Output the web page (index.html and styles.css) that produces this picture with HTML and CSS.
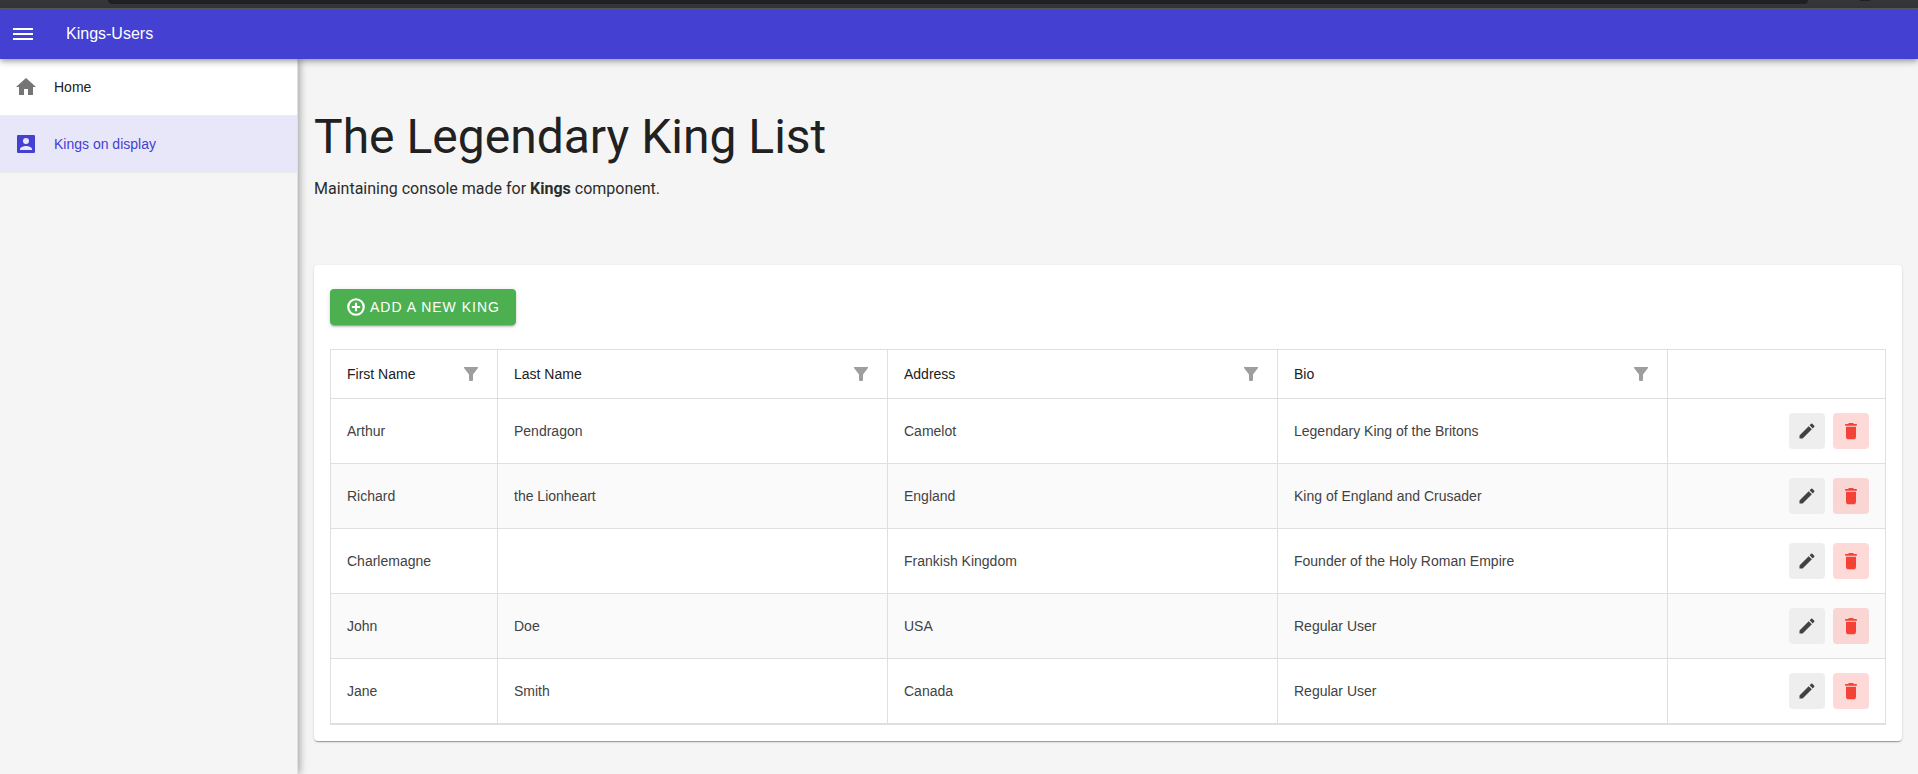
FILE: index.html
```html
<!DOCTYPE html>
<html lang="en">
<head>
<meta charset="utf-8">
<title>Kings-Users</title>
<link rel="stylesheet" href="styles.css">
</head>
<body>
<svg class="sprite" aria-hidden="true">
  <symbol id="filter" viewBox="0 0 14 14"><path d="M0 0h14v1L9 7.500V13q0 1-1 1H6q-1 0-1-1V7.500L0 1z"/></symbol>
  <symbol id="edit" viewBox="0 0 24 24"><path d="M3 17.250V21h3.750L17.810 9.940l-3.750-3.750L3 17.250zM20.710 7.040a1 1 0 0 0 0-1.410l-2.340-2.340a1 1 0 0 0-1.410 0l-1.830 1.830 3.750 3.750 1.830-1.830z"/></symbol>
  <symbol id="delete" viewBox="0 0 24 24"><path d="M6 7h12v11.500a3.500 3.500 0 0 1-3.500 3.500h-5A3.500 3.500 0 0 1 6 18.500zM19 3.500h-3.500l-1-1h-5l-1 1H5v2.300h14z"/></symbol>
</svg>
<div class="browser-strip"><span class="address-bar"></span><span class="browser-button"></span></div>
<header class="topbar">
  <button class="menu-button" type="button" aria-label="Toggle menu">
    <svg class="icon-24" viewBox="0 0 24 24"><path d="M2 6h20v2H2zM2 11h20v2H2zM2 16h20v2H2z"/></svg>
  </button>
  <span class="brand">Kings-Users</span>
</header>
<div class="layout">
  <nav class="sidebar" aria-label="Main">
    <a class="nav-link" href="#home"><svg class="icon-24" viewBox="0 0 24 24"><path d="M10 20v-6h4v6h5v-8h3L12 3 2 12h3v8z"/></svg>Home</a>
    <a class="nav-link active" href="#kings" aria-current="page"><svg class="icon-24" viewBox="0 0 24 24"><path d="M3 4v16a1 1 0 0 0 1 1h16a1 1 0 0 0 1-1V4a1 1 0 0 0-1-1H4a1 1 0 0 0-1 1zm12 5a3 3 0 1 1-6 0 3 3 0 0 1 6 0zm-9 8c0-2 4-3.100 6-3.100s6 1.100 6 3.100v1H6v-1z"/></svg>Kings on display</a>
  </nav>
  <main class="content">
    <h1 class="title">The Legendary King List</h1>
    <p class="subtitle">Maintaining console made for <strong>Kings</strong> component.</p>
    <section class="card">
      <button class="add-button" type="button"><svg class="icon-20" viewBox="0 0 24 24"><g fill="none" stroke="currentColor" stroke-width="2.600"><circle cx="12" cy="12" r="9.300"/><path d="M12 7v10M7 12h10"/></g></svg>Add a new king</button>
      <div class="grid">
        <table class="table">
          <colgroup><col class="col-first"><col><col><col><col class="col-actions"></colgroup>
          <thead>
            <tr>
              <th scope="col"><div class="head">First Name<button class="filter" type="button" aria-label="Filter first name"><svg class="icon-14"><use href="#filter"/></svg></button></div></th>
              <th scope="col"><div class="head">Last Name<button class="filter" type="button" aria-label="Filter last name"><svg class="icon-14"><use href="#filter"/></svg></button></div></th>
              <th scope="col"><div class="head">Address<button class="filter" type="button" aria-label="Filter address"><svg class="icon-14"><use href="#filter"/></svg></button></div></th>
              <th scope="col"><div class="head">Bio<button class="filter" type="button" aria-label="Filter bio"><svg class="icon-14"><use href="#filter"/></svg></button></div></th>
              <td></td>
            </tr>
          </thead>
          <tbody>
            <tr><td>Arthur</td><td>Pendragon</td><td>Camelot</td><td>Legendary King of the Britons</td><td><div class="actions"><button class="action" type="button" aria-label="Edit"><svg class="icon-20"><use href="#edit"/></svg></button><button class="action danger" type="button" aria-label="Delete"><svg class="icon-20"><use href="#delete"/></svg></button></div></td></tr>
            <tr><td>Richard</td><td>the Lionheart</td><td>England</td><td>King of England and Crusader</td><td><div class="actions"><button class="action" type="button" aria-label="Edit"><svg class="icon-20"><use href="#edit"/></svg></button><button class="action danger" type="button" aria-label="Delete"><svg class="icon-20"><use href="#delete"/></svg></button></div></td></tr>
            <tr><td>Charlemagne</td><td></td><td>Frankish Kingdom</td><td>Founder of the Holy Roman Empire</td><td><div class="actions"><button class="action" type="button" aria-label="Edit"><svg class="icon-20"><use href="#edit"/></svg></button><button class="action danger" type="button" aria-label="Delete"><svg class="icon-20"><use href="#delete"/></svg></button></div></td></tr>
            <tr><td>John</td><td>Doe</td><td>USA</td><td>Regular User</td><td><div class="actions"><button class="action" type="button" aria-label="Edit"><svg class="icon-20"><use href="#edit"/></svg></button><button class="action danger" type="button" aria-label="Delete"><svg class="icon-20"><use href="#delete"/></svg></button></div></td></tr>
            <tr><td>Jane</td><td>Smith</td><td>Canada</td><td>Regular User</td><td><div class="actions"><button class="action" type="button" aria-label="Edit"><svg class="icon-20"><use href="#edit"/></svg></button><button class="action danger" type="button" aria-label="Delete"><svg class="icon-20"><use href="#delete"/></svg></button></div></td></tr>
          </tbody>
        </table>
      </div>
    </section>
  </main>
</div>
</body>
</html>
```
FILE: styles.css
```css
* {
  box-sizing: border-box;
}

body {
  margin: 0;
  min-height: 100vh;
  display: flex;
  flex-direction: column;
  background: #f5f5f5;
  color: #212121;
  font: 14px/20px "Liberation Sans", Arial, sans-serif;
}

button {
  border: 0;
  padding: 0;
  font: inherit;
  background: none;
  cursor: pointer;
}

svg {
  display: block;
  flex: none;
  fill: currentColor;
}

.sprite {
  display: none;
}

.icon-24 {
  width: 24px;
  height: 24px;
}

.icon-20 {
  width: 20px;
  height: 20px;
}

.icon-14 {
  width: 14px;
  height: 14px;
}

/* Browser chrome above the page */
.browser-strip {
  display: flex;
  height: 9px;
  padding: 0 48px 0 108px;
  background: #35363a;
  border-bottom: 1px solid #5b5c60;
}

.address-bar {
  flex: 1;
  height: 4px;
  margin-right: 52px;
  background: #202124;
  border-radius: 0 0 12px 12px;
}

.browser-button {
  width: 10px;
  height: 1px;
  background: #202124;
}

.topbar {
  position: relative;
  z-index: 2;
  display: flex;
  align-items: center;
  height: 50px;
  padding: 0 11px;
  gap: 31px;
  color: #fff;
  background: #4340d2;
  box-shadow: 0 2px 4px -1px rgba(0, 0, 0, 0.2), 0 4px 5px rgba(0, 0, 0, 0.14), 0 1px 10px rgba(0, 0, 0, 0.12);
}

.menu-button {
  color: #fff;
}

.brand {
  font-size: 16px;
}

.layout {
  flex: 1;
  display: flex;
}

.sidebar {
  position: relative;
  z-index: 1;
  flex: none;
  width: 298px;
  background: #f5f5f5;
  border-right: 1px solid #e0e0e0;
  box-shadow: 2px 0 6px rgba(0, 0, 0, 0.2), 2px 0 10px rgba(0, 0, 0, 0.14);
}

.nav-link {
  display: flex;
  align-items: center;
  gap: 16px;
  height: 57px;
  padding: 0 14px;
  color: #212121;
  background: #fff;
  border-bottom: 1px solid #ebebeb;
  text-decoration: none;
}

.nav-link svg {
  color: #757575;
}

.nav-link.active,
.nav-link.active svg {
  color: #4340d2;
}

.nav-link.active {
  background: #e8e7f9;
}

.content {
  flex: 1;
  min-width: 0;
  padding: 48px 16px 32px;
  font-family: Roboto, sans-serif;
}

.title {
  margin: 0;
  font-size: 48px;
  line-height: 60px;
  font-weight: 400;
}

.subtitle {
  margin: 10px 0 64px;
  color: #2c2c2c;
  font-size: 16px;
  line-height: 24px;
}

.subtitle strong {
  font-weight: 700;
}

.card {
  padding: 24px 16px 16px;
  background: #fff;
  border-radius: 4px;
  font-family: "Liberation Sans", Arial, sans-serif;
  box-shadow: 0 2px 1px -1px rgba(0, 0, 0, 0.2), 0 1px 1px rgba(0, 0, 0, 0.14), 0 1px 3px rgba(0, 0, 0, 0.12);
}

.add-button {
  display: flex;
  align-items: center;
  gap: 4px;
  height: 36px;
  padding: 0 16px;
  margin-bottom: 24px;
  color: #fff;
  background: #4caf50;
  border-radius: 4px;
  font-weight: 500;
  text-transform: uppercase;
  letter-spacing: 1px;
  box-shadow: 0 3px 1px -2px rgba(0, 0, 0, 0.2), 0 2px 2px rgba(0, 0, 0, 0.14), 0 1px 5px rgba(0, 0, 0, 0.12);
}

.grid {
  border: 1px solid #dfdfdf;
}

.table {
  width: 100%;
  table-layout: fixed;
  border-collapse: separate;
  border-spacing: 0;
}

.col-first {
  width: 167px;
}

.col-actions {
  width: 217px;
}

.table th,
.table td {
  height: 65px;
  padding: 0 16px;
  color: #424242;
  font-weight: 400;
  text-align: left;
  border-right: 1px solid #dfdfdf;
  border-bottom: 1px solid #dfdfdf;
}

.table thead th,
.table thead td {
  height: 49px;
  color: #212121;
}

.table th:last-child,
.table td:last-child {
  border-right: 0;
}

.table tbody tr:nth-child(even) {
  background: #fafafa;
}

.head {
  display: flex;
  align-items: center;
  justify-content: space-between;
}

.filter {
  padding: 3px;
  color: #9e9e9e;
}

.actions {
  display: flex;
  justify-content: flex-end;
  gap: 8px;
}

.action {
  display: grid;
  place-items: center;
  width: 36px;
  height: 36px;
  color: #424242;
  background: #eee;
  border-radius: 4px;
}

.action.danger {
  color: #f44336;
  background: rgba(244, 67, 54, 0.2);
}
```
